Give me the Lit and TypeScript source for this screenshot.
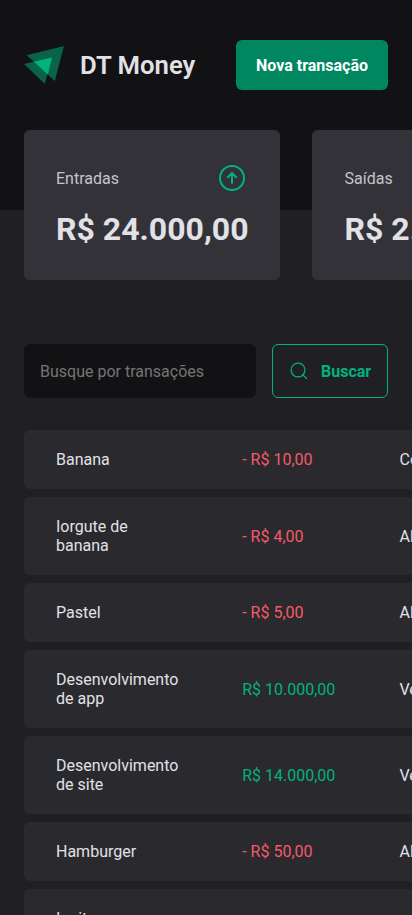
import { LitElement, html, css, svg } from "lit";
import { customElement } from "lit/decorators.js";

interface Transaction {
  title: string;
  price: string;
  category: string;
  date: string;
  outcome: boolean;
}

const transactions: Transaction[] = [
  { title: "Banana", price: "R$ 10,00", category: "Comida", date: "10/01/2023", outcome: true },
  { title: "Iorgute de banana", price: "R$ 4,00", category: "Alimentação", date: "10/01/2023", outcome: true },
  { title: "Pastel", price: "R$ 5,00", category: "Alimentação", date: "10/01/2023", outcome: true },
  { title: "Desenvolvimento de app", price: "R$ 10.000,00", category: "Venda", date: "10/01/2023", outcome: false },
  { title: "Desenvolvimento de site", price: "R$ 14.000,00", category: "Venda", date: "10/01/2023", outcome: false },
  { title: "Hamburger", price: "R$ 50,00", category: "Alimentação", date: "10/01/2023", outcome: true },
  { title: "Ignite Rocketseat", price: "R$ 2.000,00", category: "Educação", date: "10/01/2023", outcome: true },
];

const arrow = (up: boolean) => svg`
  <circle cx="16" cy="16" r="12"></circle>
  <path d=${up ? "M11.75 15.25 16 11l4.25 4.25M16 21V11" : "M11.75 16.75 16 21l4.25-4.25M16 11V21"}></path>`;

@customElement("app-root")
export class AppRoot extends LitElement {
  static styles = css`
    :host {
      display: block;
      height: 100vh;
      overflow: hidden;
      background: #202024;
      color: #e1e1e6;
      font: 400 16px Roboto, sans-serif;
      -webkit-font-smoothing: antialiased;
    }
    * { box-sizing: border-box; margin: 0; }
    header { background: #121214; height: 210px; padding: 40px 24px 0; }
    .bar { display: flex; align-items: center; justify-content: space-between; height: 50px; }
    .brand { display: flex; align-items: center; gap: 16px; }
    .brand svg { width: 40px; height: 40px; display: block; }
    .name { font-size: 25.7px; font-weight: 600; line-height: 30px; white-space: nowrap; }
    .new {
      height: 50px; padding: 0 20px; border: 0; border-radius: 6px;
      background: #00875f; color: #fff; font: 700 16px Roboto, sans-serif;
    }
    .summary { display: flex; gap: 32px; margin-top: -80px; padding-left: 24px; overflow: hidden; }
    .card { flex: none; min-width: 256px; height: 150px; padding: 32px; border-radius: 6px; background: #323238; }
    .label { display: flex; align-items: center; justify-content: space-between; height: 32px; color: #c4c4cc; }
    .label svg { width: 32px; height: 32px; fill: none; stroke: #00b37e; stroke-width: 2; stroke-linecap: round; stroke-linejoin: round; }
    .label svg.down { stroke: #f75a68; }
    .total { display: block; margin-top: 16px; font-size: 32px; font-weight: 700; line-height: 38px; white-space: nowrap; }
    .search { display: flex; gap: 16px; margin: 64px 24px 0; height: 54px; }
    .search input {
      flex: 1; min-width: 0; padding: 16px; border: 0; border-radius: 6px;
      background: #121214; color: #c4c4cc; font: 400 16px Roboto, sans-serif;
    }
    .search input::placeholder { color: #757575; }
    .find {
      display: flex; align-items: center; gap: 12px; width: 116px; padding: 0 16px;
      border: 1px solid #00b37e; border-radius: 6px; background: transparent;
      color: #00b37e; font: 700 16px Roboto, sans-serif;
    }
    .find svg { flex: none; width: 20px; height: 20px; fill: none; stroke: currentColor; stroke-width: 1.25; stroke-linecap: round; }
    .list { display: flex; flex-direction: column; gap: 8px; margin: 32px 0 0 24px; overflow: hidden; }
    .row {
      display: grid; grid-template-columns: 186.2px 157.3px 160px 140px; align-items: center;
      width: 690px; padding: 20px 0; border-radius: 6px; background: #29292e; line-height: 19px;
    }
    .row > * { padding: 0 32px; }
    .row .income, .row .outcome { white-space: nowrap; }
    .income { color: #00b37e; }
    .outcome { color: #f75a68; }
  `;

  render() {
    return html`
      <header>
        <div class="bar">
          <div class="brand">
            <svg viewBox="0 0 40 40">
              <path d="M2.7 10.3 40 1 30.8 36.1Z" fill="#00b37e" fill-opacity=".5"></path>
              <path d="M0 19 28 12.5 20.7 38.8Z" fill="#00b37e" fill-opacity=".5"></path>
              <path d="M10.1 16.7 28 12.5 23.8 29.5Z" fill="#00b37e"></path>
            </svg>
            <span class="name">DT Money</span>
          </div>
          <button class="new">Nova transação</button>
        </div>
      </header>
      <section class="summary">
        <div class="card">
          <div class="label"><span>Entradas</span><svg viewBox="0 0 32 32">${arrow(true)}</svg></div>
          <strong class="total">R$ 24.000,00</strong>
        </div>
        <div class="card">
          <div class="label"><span>Saídas</span><svg class="down" viewBox="0 0 32 32">${arrow(false)}</svg></div>
          <strong class="total">R$ 2.069,00</strong>
        </div>
      </section>
      <form class="search">
        <input placeholder="Busque por transações" />
        <button class="find" type="button">
          <svg viewBox="0 0 20 20"><circle cx="9.06" cy="9.06" r="6.9"></circle><path d="m13.9 13.9 3.6 3.6"></path></svg>
          Buscar
        </button>
      </form>
      <div class="list">
        ${transactions.map((t) => html`
          <div class="row">
            <span class="title">${t.title}</span>
            <span class=${t.outcome ? "outcome" : "income"}>${t.outcome ? "- " : ""}${t.price}</span>
            <span class="category">${t.category}</span>
            <span>${t.date}</span>
          </div>`)}
      </div>
    `;
  }
}
